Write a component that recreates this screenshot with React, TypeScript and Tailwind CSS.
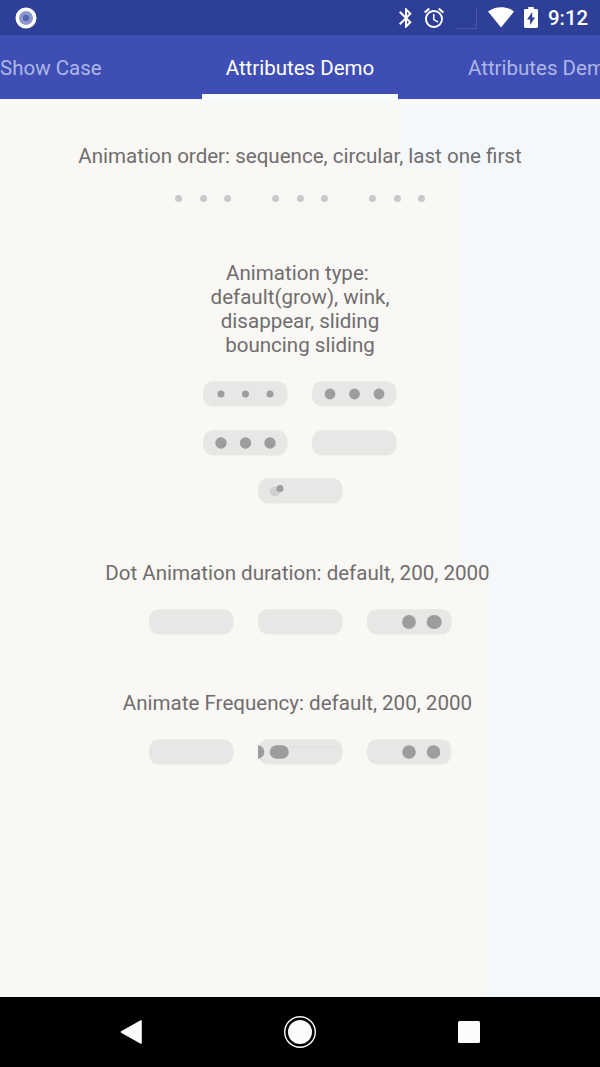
import React from "react";
import { MdBluetooth, MdAccessAlarm } from "react-icons/md";

type Dot = { x: number; r: number; y?: number; soft?: boolean; rx?: number };

const DOT = "#9e9c9d";

function Bubble({ dots = [], trail = false }: { dots?: Dot[]; trail?: boolean }) {
  return (
    <div className="h-[26px] w-[85px] shrink-0 overflow-hidden">
      <svg width="85" height="26" viewBox="0 0 85 26" className="block">
        <rect x="0" y="0.3" width="84.5" height="25.2" rx="10" fill="#e8e7e6" />
        {trail && <path d="M28 8.2H79" stroke="#dbdadb" strokeWidth="1" />}
        {dots.map((d, i) => (
          <ellipse
            key={i}
            cx={d.x}
            cy={d.y ?? 13}
            rx={d.rx ?? d.r}
            ry={d.r}
            fill={d.soft ? "#d0ced0" : DOT}
          />
        ))}
      </svg>
    </div>
  );
}

function SmallDots() {
  return (
    <div className="flex w-[56px] justify-between">
      <span className="size-[7px] rounded-full bg-[#cac8ca]" />
      <span className="size-[7px] rounded-full bg-[#cac8ca]" />
      <span className="size-[7px] rounded-full bg-[#cac8ca]" />
    </div>
  );
}

function StatusBar() {
  return (
    <div className="flex h-[35px] shrink-0 items-center bg-[#2e3f98] pl-[15px] text-white">
      <svg width="22" height="22" viewBox="0 0 22 22">
        <circle cx="11" cy="11" r="10.5" fill="#fff" />
        <circle cx="11" cy="11" r="7" fill="#8f98cf" />
        <circle cx="11" cy="11" r="3.2" fill="#5865b2" />
      </svg>
      <MdBluetooth className="ml-[357px] size-6" />
      <MdAccessAlarm className="ml-[4px] size-6" />
      <svg className="ml-[10px]" width="22" height="22" viewBox="0 0 22 22">
        <path d="M0 21.5H20.5V1" fill="none" stroke="#4656b0" strokeWidth="1" />
      </svg>
      <svg className="ml-[10px]" width="26" height="21" viewBox="0 0 26 21">
        <path d="M0 4.5C7.5-1.3 18.5-1.3 26 4.5L13 20.5Z" fill="#fff" />
      </svg>
      <svg className="ml-[10px]" width="14" height="21" viewBox="0 0 14 21">
        <path
          d="M4.2 0H9.8V2H12.6Q14 2 14 3.4V19.6Q14 21 12.6 21H1.4Q0 21 0 19.6V3.4Q0 2 1.4 2H4.2Z"
          fill="#fff"
        />
        <path d="M8.2 5L3 12.5H6.1V18L11 10.5H8.2Z" fill="#2e3f98" />
      </svg>
      <span className="ml-[10px] pt-px text-[20.4px] leading-6 font-medium">9:12</span>
    </div>
  );
}

function Tabs() {
  return (
    <div className="relative flex h-[64px] shrink-0 items-center overflow-hidden bg-[#3f4eb4] pt-px text-[20.5px] leading-6 whitespace-nowrap text-[#aeb6e5]">
      <span className="w-[202px] shrink-0">Show Case</span>
      <span className="w-[196px] shrink-0 text-center text-white">Attributes Demo</span>
      <span className="shrink-0 pl-[70px]">Attributes Demo</span>
      <span className="absolute bottom-0 left-[202px] h-[5px] w-[196px] bg-[#f9fcfd]" />
    </div>
  );
}

export default function App() {
  return (
    <div className="flex h-[1067px] w-[600px] flex-col overflow-hidden font-[Roboto,sans-serif]">
      <StatusBar />
      <Tabs />
      <main className="flex flex-1 flex-col items-center [background:linear-gradient(#f8fafa,#f8fafa)_0_0/100%_7px_no-repeat,linear-gradient(#faf8f4,#faf8f4)_0_0/400px_70px_no-repeat,linear-gradient(#faf8f4,#faf8f4)_0_70px/462px_396px_no-repeat,linear-gradient(#faf8f4,#faf8f4)_0_466px/487px_432px_no-repeat,#f5f8fb] pt-[45px] text-center text-[20.55px] leading-6 text-[#6f6d6e]">
        <h2 className="whitespace-nowrap">Animation order: sequence, circular, last one first</h2>
        <div className="mt-[27px] flex gap-[41px]">
          <SmallDots />
          <SmallDots />
          <SmallDots />
        </div>

        <h2 className="mt-[59px] whitespace-nowrap">
          Animation type:&nbsp;
          <br />
          default(grow), wink,
          <br />
          disappear, sliding
          <br />
          bouncing sliding
        </h2>
        <div className="mt-6 flex gap-6">
          <Bubble dots={[{ x: 18, r: 3.5 }, { x: 42.5, r: 3.5 }, { x: 67, r: 3.5 }]} />
          <Bubble dots={[{ x: 18, r: 5.4 }, { x: 42.5, r: 5.4 }, { x: 67, r: 5.4 }]} />
        </div>
        <div className="mt-[23px] flex gap-6">
          <Bubble dots={[{ x: 18, r: 5.7 }, { x: 42.5, r: 5.7 }, { x: 67, r: 5.7 }]} />
          <Bubble />
        </div>
        <div className="mt-[22px] flex">
          <Bubble
            dots={[
              { x: 17, y: 13.5, r: 5, soft: true },
              { x: 22, y: 10.5, r: 3.5 },
            ]}
          />
        </div>

        <h2 className="mt-[57px] whitespace-nowrap">Dot Animation duration: default, 200, 2000&nbsp;</h2>
        <div className="mt-6 flex gap-6">
          <Bubble />
          <Bubble />
          <Bubble dots={[{ x: 42, r: 6.9 }, { x: 67.2, r: 6.9, rx: 7.6 }]} />
        </div>

        <h2 className="mt-[56px] whitespace-nowrap">Animate Frequency: default, 200, 2000&nbsp;</h2>
        <div className="mt-6 flex gap-6">
          <Bubble />
          <Bubble
            trail
            dots={[
              { x: -0.5, r: 6.8 },
              { x: 18.5, r: 6.8 },
              { x: 21, r: 6.8 },
              { x: 24, r: 6.8 },
            ]}
          />
          <Bubble dots={[{ x: 42, r: 6.8 }, { x: 66.5, r: 6.8 }]} />
        </div>
      </main>
      <nav className="flex h-[70px] shrink-0 items-center justify-between bg-black pr-[120px] pl-[120px]">
        <svg width="22" height="24" viewBox="0 0 22 24">
          <path
            d="M1.5 12L21 1V23Z"
            fill="#fdfbfb"
            stroke="#fdfbfb"
            strokeWidth="1.6"
            strokeLinejoin="round"
          />
        </svg>
        <svg width="32" height="32" viewBox="0 0 32 32">
          <circle cx="16" cy="16" r="15.3" fill="none" stroke="#fdfbfb" strokeWidth="1.4" />
          <circle cx="16" cy="16" r="12" fill="#fdfbfb" />
        </svg>
        <span className="size-[22px] rounded-[1.5px] bg-[#fdfbfb]" />
      </nav>
    </div>
  );
}
